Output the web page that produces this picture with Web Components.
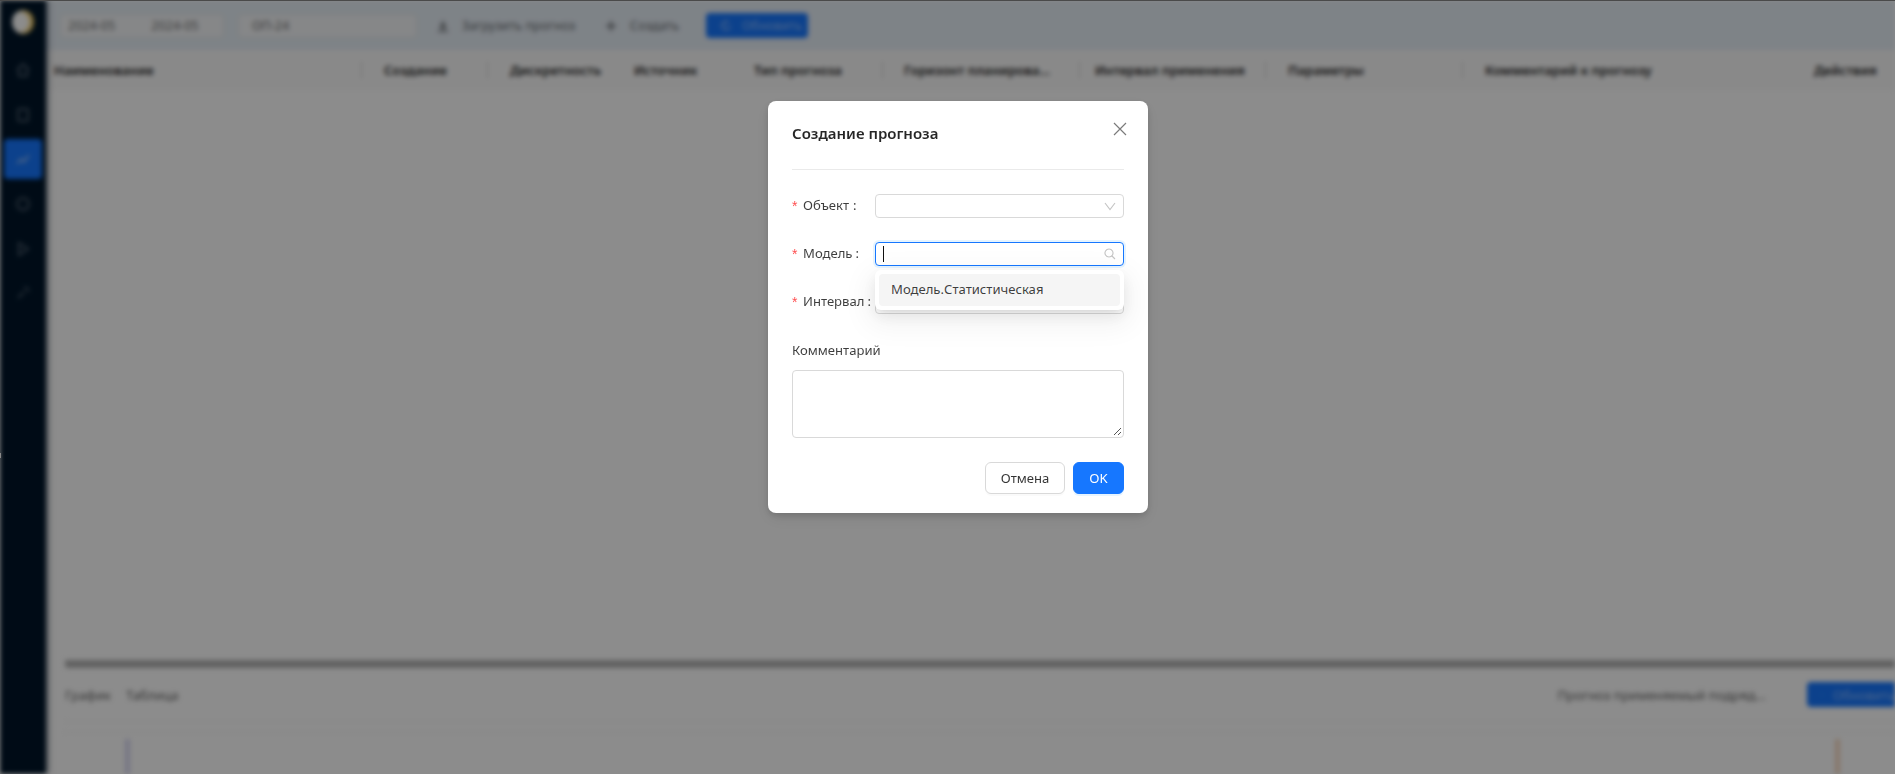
<!DOCTYPE html>
<html lang="ru">
<head>
<meta charset="utf-8">
<title>Создание прогноза</title>
<style>
html,body{margin:0;height:100%;overflow:hidden;background:#fff}
body{font-family:"Noto Sans","Open Sans","Noto Sans CJK SC",sans-serif;font-size:13.1px;color:rgba(0,0,0,.88)}
</style>
</head>
<body>
<template id="t-app">
<style>
:host{display:flex;height:774px;width:1895px;overflow:hidden;filter:blur(2.8px)}
.main{flex:1;min-width:0;display:flex;flex-direction:column;overflow:hidden}
.space{flex:1}
</style>
<fc-sidebar></fc-sidebar>
<div class="main">
<fc-toolbar></fc-toolbar>
<fc-table-head></fc-table-head>
<div class="space"></div>
<fc-lower-panel></fc-lower-panel>
</div>
</template>

<template id="t-sidebar">
<style>
:host{display:flex;flex-direction:column;align-items:center;flex:none;width:46px;background:#001529;box-shadow:2px 0 5px rgba(0,21,41,.5);position:relative;z-index:1}
.logo{margin-top:10px;margin-bottom:16px;width:22px;height:24px;border-radius:50%;background:radial-gradient(circle at 30% 50%,#fff 0 45%,#f0c040 75%,#002040 100%)}
.item{width:38px;height:40px;border-radius:4px;margin-bottom:4.7px;display:flex;align-items:center;justify-content:center;color:#4a5a6a}
.item.on{background:#1677ff;color:#8db8f5}
svg{width:16px;height:16px;fill:none;stroke:currentColor;stroke-width:2}
</style>
<div class="logo"></div>
<div class="item"><svg viewBox="0 0 16 16"><path d="M2 8l6-6 6 6M4 7v7h8V7"/></svg></div>
<div class="item"><svg viewBox="0 0 16 16"><rect x="3" y="2" width="10" height="12" rx="1"/></svg></div>
<div class="item on"><svg viewBox="0 0 16 16"><path d="M2 13l4-5 3 3 5-7"/></svg></div>
<div class="item"><svg viewBox="0 0 16 16"><circle cx="8" cy="8" r="6"/></svg></div>
<div class="item"><svg viewBox="0 0 16 16"><path d="M4 2l9 6-9 6z"/></svg></div>
<div class="item"><svg viewBox="0 0 16 16"><path d="M3 13l6-6M9 3a3 3 0 0 1 4 4"/></svg></div>
</template>

<template id="t-toolbar">
<style>
:host{display:flex;align-items:center;height:50px;flex:none;box-sizing:border-box;padding:1px 0 0 14px;background:#e6eef6;font-size:12.6px;color:rgba(0,0,0,.62)}
.box{height:24px;box-sizing:border-box;background:#f4f6f8;border:1px solid #e2e6ea;border-radius:4px;display:flex;align-items:center}
.range{width:164px;padding-left:7px;gap:36px}
.sel{width:179px;margin-left:14px;padding-left:13px}
.btn{display:flex;align-items:center;gap:13px;white-space:nowrap}
.load{margin-left:20px}
.make{margin-left:30px}
svg{width:12px;height:12px;fill:none;stroke:currentColor;stroke-width:1.6}
.primary{margin-left:27px;width:102px;height:25px;border-radius:4px;background:#1677ff;color:#8fbcff;display:flex;align-items:center;gap:10px;box-sizing:border-box;padding-left:14px}
</style>
<div class="box range"><span>2024-05</span><span>2024-05</span></div>
<div class="box sel"><span>ОП-24</span></div>
<div class="btn load"><svg viewBox="0 0 12 12"><path d="M6 1v7M3 5l3 3 3-3M1 11h10"/></svg><span>Загрузить прогноз</span></div>
<div class="btn make"><svg viewBox="0 0 12 12"><path d="M6 1v10M1 6h10"/></svg><span>Создать</span></div>
<div class="primary"><svg viewBox="0 0 12 12"><path d="M10 6a4 4 0 1 1-1-3"/></svg><span>Обновить</span></div>
</template>

<template id="t-table-head">
<style>
:host{display:grid;flex:none;height:40px;align-items:center;background:#fafafa;font-weight:600;font-size:13px;color:#222;
grid-template-columns:308px 126px 124px 120px 151px 197px 186px 197px 351px 1fr;padding-left:8px;box-sizing:border-box;white-space:nowrap}
span{display:block;overflow:hidden;box-sizing:border-box;height:18px;line-height:18px}
.s{border-right:1px solid #cfcfcf;}
</style>
<span class="s">Наименование</span>
<span class="s" style="padding-left:22px">Создание</span>
<span style="padding-left:22px">Дискретность</span>
<span style="padding-left:22px">Источник</span>
<span class="s" style="padding-left:22px">Тип прогноза</span>
<span class="s" style="padding-left:21px">Горизонт планирова...</span>
<span class="s" style="padding-left:15px">Интервал применения</span>
<span class="s" style="padding-left:22px">Параметры</span>
<span style="padding-left:22px">Комментарий к прогнозу</span>
<span>Действия</span>
</template>

<template id="t-lower">
<style>
:host{display:block;flex:none;height:114px;padding-left:19px;overflow:hidden;font-size:13px;color:rgba(0,0,0,.65)}
.split{height:9px;background:#b2b2b2;border-radius:3px 0 0 3px;margin-top:-1px}
.bar{height:53px;display:flex;align-items:center;gap:15px;border-bottom:1px solid #f3f3f3}
.gap{flex:1}
.sel{white-space:nowrap;margin-right:26px}
.primary{width:88px;height:25px;border-radius:4px 0 0 4px;background:#1677ff;color:#8fbcff;display:flex;align-items:center;gap:10px;box-sizing:border-box;padding-left:14px;flex:none;white-space:nowrap}
svg{width:12px;height:12px;fill:none;stroke:currentColor;stroke-width:1.6}
.chart{display:flex;justify-content:space-between;padding:6px 55px 0 60px;height:50px;border-top:1px dotted #e4e4e4;margin-top:10px}
.v{width:5px;height:50px;background:#d6d6f0}
.o{width:5px;height:50px;background:#f5d8c0}
</style>
<div class="split"></div>
<div class="bar"><span>График</span><span>Таблица</span><span class="gap"></span><span class="sel">Прогноз применяемый подряд...</span><div class="primary"><svg viewBox="0 0 12 12"><path d="M10 6a4 4 0 1 1-1-3"/></svg><span>Обновить</span></div></div>
<div class="chart"><div class="v"></div><div class="o"></div></div>
</template>

<template id="t-overlay">
<style>
:host{position:fixed;inset:0;display:block;box-sizing:border-box;background:rgba(0,0,0,.45);border-top:1px solid #4a4a4a;padding:100px 0 0 768px}
.tick{position:absolute;left:0;top:452px;width:1px;height:5px;background:#8a8a8a}
</style>
<div class="tick"></div>
<slot></slot>
</template>

<template id="t-modal">
<style>
:host{display:block;width:380px;height:412px;box-sizing:border-box;background:#fff;border-radius:8px;padding:0 24px;box-shadow:0 6px 16px rgba(0,0,0,.08),0 3px 6px rgba(0,0,0,.12);position:relative}
header{height:68px;border-bottom:1px solid #eaeaea;display:flex;align-items:center}
h2{margin:0 0 4px;font-size:15px;line-height:22px;font-weight:600;color:rgba(0,0,0,.85)}
.x{position:absolute;left:344px;top:20px;width:16px;height:16px;color:#7b7b7b}
.x svg{display:block;width:16px;height:16px;fill:none;stroke:currentColor;stroke-width:1.2}
.form{padding-top:24px;display:flex;flex-direction:column;gap:24px}
.cl{margin-top:2px;line-height:20px;height:22px;color:rgba(0,0,0,.76)}
.ta{margin-top:-16px;height:68px;box-sizing:border-box;border:1px solid #d9d9d9;border-radius:4px;position:relative}
.ta svg{position:absolute;right:1px;bottom:1px;width:9px;height:9px;stroke:#555;stroke-width:1;fill:none}
footer{display:flex;justify-content:flex-end;gap:8px;margin-top:24px}
</style>
<header><h2><slot name="title"></slot></h2></header>
<div class="x"><svg viewBox="0 0 16 16"><path d="M2 2l12 12M14 2L2 14"/></svg></div>
<div class="form">
<slot></slot>
<div class="cl">Комментарий</div>
<div class="ta"><svg viewBox="0 0 9 9"><path d="M1 8l7-7M5 8l3-3"/></svg></div>
</div>
<footer><slot name="actions"></slot></footer>
</template>

<template id="t-field">
<style>
:host{display:flex;height:24px;align-items:center;position:relative;z-index:var(--z,0)}
label{flex:none;width:83px;display:flex;align-items:center;color:rgba(0,0,0,.76);white-space:nowrap;padding-bottom:2px;box-sizing:border-box}
i{font-style:normal;color:#ff4d4f;width:11px;font-family:"Liberation Sans",sans-serif;font-size:14px;padding-top:2px}
b{font-weight:400;margin-left:var(--colon,3px)}
.in{flex:1;height:24px;box-sizing:border-box;border:1px solid #d9d9d9;border-radius:4px;background:#fff;display:flex;align-items:center;justify-content:space-between;padding:0 7px}
:host([focus]) .in{border-color:#1677ff;box-shadow:0 0 0 2px rgba(5,145,255,.1)}
.caret{width:1px;height:16px;background:#111}
svg{width:12px;height:12px;fill:none;stroke:#c4c4c4;stroke-width:1.1;margin-left:auto}
</style>
<label><i>*</i><span><slot></slot></span><b>:</b></label>
<div class="in"><span class="caret" hidden></span><svg viewBox="0 0 12 12"><path class="p" d=""/></svg></div>
<slot name="pop"></slot>
</template>

<template id="t-dropdown">
<style>
:host{position:absolute;left:83px;top:28px;width:249px;box-sizing:border-box;padding:4px;background:#fff;border-radius:6px;box-shadow:0 6px 16px rgba(0,0,0,.08),0 3px 6px -4px rgba(0,0,0,.12),0 9px 28px 8px rgba(0,0,0,.05)}
div{height:32px;border-radius:4px;background:#f5f5f5;display:flex;align-items:center;padding:0 0 2px 12px;box-sizing:border-box;color:rgba(0,0,0,.76);white-space:nowrap}
</style>
<div><slot></slot></div>
</template>

<template id="t-button">
<style>
:host{display:flex;align-items:center;justify-content:center;height:32px;box-sizing:border-box;border:1px solid #d9d9d9;border-radius:6px;background:#fff;color:rgba(0,0,0,.8);width:80px;box-shadow:0 2px 0 rgba(0,0,0,.02);padding-bottom:1px}
:host([primary]){background:#1677ff;border-color:#1677ff;color:#fff;width:51px;box-shadow:0 2px 0 rgba(5,145,255,.1)}
</style>
<slot></slot>
</template>

<fc-app></fc-app>
<fc-overlay>
<fc-modal>
<span slot="title">Создание прогноза</span>
<fc-field icon="down" style="--colon:4px">Объект</fc-field>
<fc-field icon="search" focus style="--z:2;--colon:3px">Модель<fc-dropdown slot="pop">Модель.Статистическая</fc-dropdown></fc-field>
<fc-field>Интервал</fc-field>
<fc-button slot="actions">Отмена</fc-button>
<fc-button slot="actions" primary>OK</fc-button>
</fc-modal>
</fc-overlay>

<script>
const tag = (name, tpl, setup) => customElements.define(name, class extends HTMLElement {
  constructor(){
    super();
    const r = this.attachShadow({mode:'open'});
    r.appendChild(document.getElementById(tpl).content.cloneNode(true));
    if (setup) setup(r, this);
  }
});
tag('fc-sidebar','t-sidebar');
tag('fc-toolbar','t-toolbar');
tag('fc-table-head','t-table-head');
tag('fc-lower-panel','t-lower');
tag('fc-overlay','t-overlay');
tag('fc-modal','t-modal');
tag('fc-dropdown','t-dropdown');
tag('fc-button','t-button');
tag('fc-field','t-field',(r,h)=>{
  const ic = h.getAttribute('icon'), p = r.querySelector('.p');
  if (ic==='down') p.setAttribute('d','M1 3l5 6.5 5-6.5');
  else if (ic==='search') { p.setAttribute('d','M5 1a4 4 0 1 0 .01 0M8 8l3 3'); }
  else r.querySelector('svg').remove();
  if (h.hasAttribute('focus')) r.querySelector('.caret').hidden = false;
});
tag('fc-app','t-app');
</script>
</body>
</html>
